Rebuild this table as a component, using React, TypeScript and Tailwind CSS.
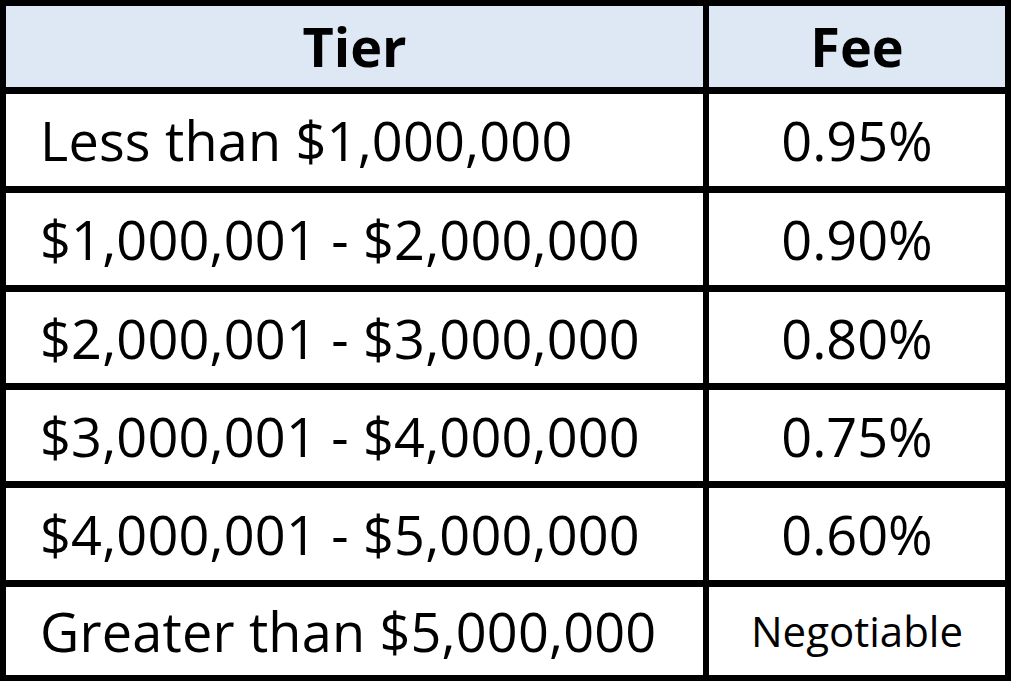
import { Fragment } from "react";

const rows = [
  { tier: "Less than $1,000,000", fee: "0.95%" },
  { tier: "$1,000,001 - $2,000,000", fee: "0.90%" },
  { tier: "$2,000,001 - $3,000,000", fee: "0.80%" },
  { tier: "$3,000,001 - $4,000,000", fee: "0.75%" },
  { tier: "$4,000,001 - $5,000,000", fee: "0.60%" },
  { tier: "Greater than $5,000,000", fee: "Negotiable" },
];

export default function App() {
  return (
    <div className="w-[1011px] h-[681px] bg-white font-['Open_Sans',sans-serif] text-black">
      <div className="grid grid-cols-[697px_296px] grid-rows-[81px_92px_92px_91px_91px_92px_88px] gap-x-[6px] gap-y-[7px] bg-black p-[6px]">
        <div className="flex items-center justify-center bg-[#dde8f4] text-[54px] font-bold leading-none pb-[2px]">
          Tier
        </div>
        <div className="flex items-center justify-center bg-[#dde8f4] text-[54px] font-bold leading-none pb-[2px]">
          Fee
        </div>
        {rows.map((r) => (
          <Fragment key={r.tier}>
            <div className="flex items-center bg-white pl-[34px] text-[54px] leading-none tracking-[0.2px]">
              {r.tier}
            </div>
            <div
              className={
                r.fee === "Negotiable"
                  ? "flex items-center justify-center bg-white text-[42px] leading-none"
                  : "flex items-center justify-center bg-white text-[54px] leading-none"
              }
            >
              {r.fee}
            </div>
          </Fragment>
        ))}
      </div>
    </div>
  );
}
